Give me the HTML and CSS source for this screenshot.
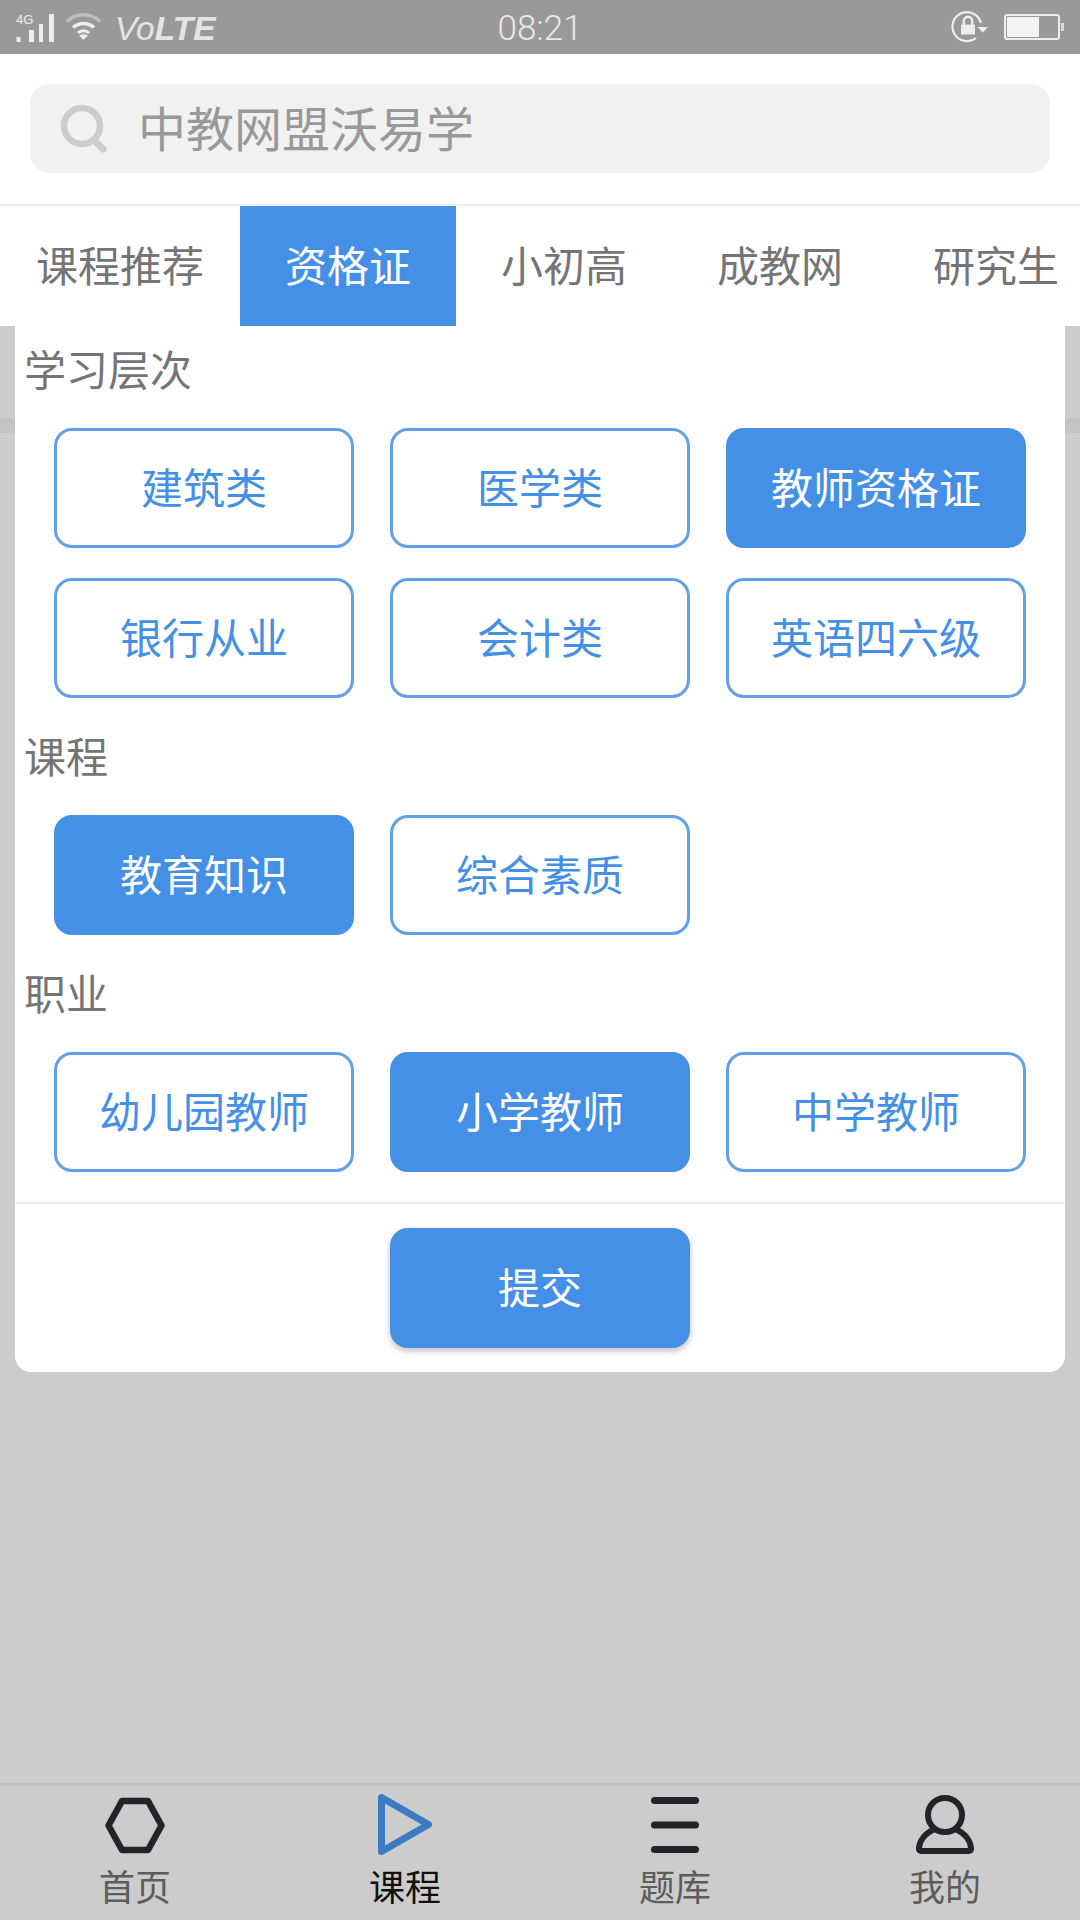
FILE: index.html
```html
<!DOCTYPE html>
<html lang="zh-CN">
<head>
<meta charset="utf-8">
<title>课程</title>
<link rel="stylesheet" href="styles.css">
</head>
<body>
<div class="page">
  <header class="status">
    <div class="status-left">
      <span class="net">
        <span class="net-label">4G</span>
        <svg class="signal" width="38" height="28" viewBox="0 0 38 28"><rect x="0.500" y="23" width="4" height="5" fill="#eee"/><rect x="13" y="16" width="5" height="12" fill="#eee"/><rect x="23" y="10" width="4" height="18" fill="#eee"/><rect x="33" y="0" width="5" height="28" fill="#eee"/></svg>
      </span>
      <svg class="wifi" width="37" height="28" viewBox="0 0 37 28" fill="none"><path d="M2 8.500C11 -0.500 26 -0.500 35 8.500" stroke="#bdbdbd" stroke-width="3.500"/><path d="M8 14.500C14 9 23 9 29 14.500" stroke="#eee" stroke-width="3.500"/><path d="M13 20C16 17 21 17 24 20" stroke="#eee" stroke-width="3"/><path d="M18.500 27l-4.500-4.500q4.500-3 9 0z" fill="#eee"/></svg>
      <span class="volte"><span class="volte-vo">Vo</span><b>LTE</b></span>
    </div>
    <time class="clock">08:21</time>
    <div class="status-right">
      <svg width="38" height="34" viewBox="0 0 38 34" fill="none"><path d="M30 13A14.500 14.500 0 1 0 25 28" stroke="#eee" stroke-width="2.200"/><path d="M26.500 17h10.500l-5.200 5.500z" fill="#eee"/><path d="M12.800 15V11a4.200 4.200 0 0 1 8.400 0V15" stroke="#eee" stroke-width="2.400"/><rect x="10" y="14.500" width="14" height="10" fill="#eee"/></svg>
      <span class="battery"><span class="battery-fill"></span></span>
      <span class="battery-tip"></span>
    </div>
  </header>

  <section class="search-wrap">
    <div class="search">
      <svg width="48" height="50" viewBox="0 0 48 50" fill="none" stroke="#ccc"><circle cx="22" cy="22" r="18" stroke-width="6.500"/><path d="M34 36l9 9" stroke-width="7" stroke-linecap="round"/></svg>
      <span class="search-text">中教网盟沃易学</span>
    </div>
  </section>

  <nav class="tabs">
    <a class="tab tab-first">课程推荐</a>
    <a class="tab tab-active">资格证</a>
    <a class="tab">小初高</a>
    <a class="tab">成教网</a>
    <a class="tab">研究生</a>
  </nav>

  <main class="overlay">
    <div class="panel">
      <section class="group">
        <h2 class="group-title">学习层次</h2>
        <div class="options">
          <button class="opt">建筑类</button>
          <button class="opt">医学类</button>
          <button class="opt opt-on">教师资格证</button>
          <button class="opt">银行从业</button>
          <button class="opt">会计类</button>
          <button class="opt">英语四六级</button>
        </div>
      </section>
      <section class="group">
        <h2 class="group-title">课程</h2>
        <div class="options">
          <button class="opt opt-on">教育知识</button>
          <button class="opt">综合素质</button>
        </div>
      </section>
      <section class="group">
        <h2 class="group-title">职业</h2>
        <div class="options">
          <button class="opt">幼儿园教师</button>
          <button class="opt opt-on">小学教师</button>
          <button class="opt">中学教师</button>
        </div>
      </section>
      <div class="panel-foot">
        <button class="opt opt-on submit">提交</button>
      </div>
    </div>
  </main>

  <footer class="bottom-nav">
    <a class="nav-item">
      <svg class="nav-icon" width="60" height="62" viewBox="0 0 60 62" fill="none"><path d="M17 7H43L56.500 31.500 43 56H17L3.500 31.500Z" stroke="#222428" stroke-width="6.500" stroke-linejoin="round"/></svg>
      <span>首页</span>
    </a>
    <a class="nav-item nav-active">
      <svg class="nav-icon" width="60" height="62" viewBox="0 0 60 62" fill="none"><path d="M6.500 3.500V57.500L53.500 30.500Z" stroke="#3a7bc4" stroke-width="7" stroke-linejoin="round"/></svg>
      <span>课程</span>
    </a>
    <a class="nav-item">
      <svg class="nav-icon" width="60" height="62" viewBox="0 0 60 62" fill="none" stroke="#222428" stroke-width="7" stroke-linecap="round"><path d="M9.500 6.500H50.500"/><path d="M9.500 31H50.500"/><path d="M9.500 55.500H50.500"/></svg>
      <span>题库</span>
    </a>
    <a class="nav-item">
      <svg class="nav-icon" width="60" height="62" viewBox="0 0 60 62" fill="none" stroke="#222428" stroke-width="6" stroke-linejoin="round"><circle cx="30" cy="21" r="17"/><path d="M20 35C10 39 4 47 4 55a2 2 0 0 0 2 2H54a2 2 0 0 0 2-2C56 47 50 39 40 35"/></svg>
      <span>我的</span>
    </a>
  </footer>
</div>
</body>
</html>
```

FILE: styles.css
```css
* {
  box-sizing: border-box;
}

html,
body {
  margin: 0;
  padding: 0;
}

body {
  font-family: Roboto, "Noto Sans CJK SC", sans-serif;
}

.page {
  width: 1080px;
  height: 1920px;
  display: flex;
  flex-direction: column;
  overflow: hidden;
  background: #ccc;
}

/* Status bar */
.status {
  height: 54px;
  flex: none;
  display: grid;
  grid-template-columns: 1fr auto 1fr;
  align-items: center;
  background: #999;
  color: #eee;
}

.status-left {
  display: flex;
  align-items: center;
  padding-left: 16px;
}

.net {
  display: block;
  position: relative;
  width: 38px;
  height: 28px;
  margin-top: 2px;
}

.net-label {
  position: absolute;
  left: 0;
  top: -1px;
  font: 13px/13px "Liberation Sans", sans-serif;
  color: #eee;
}

.signal {
  display: block;
}

.wifi {
  margin-left: 11px;
}

.volte {
  margin-left: 13px;
  margin-top: 4px;
  font: italic 33.500px/40px "Liberation Sans", sans-serif;
  color: #e4e4e4;
}

.volte-vo {
  font-weight: 400;
}

.clock {
  padding-top: 2px;
  font-size: 35px;
  font-weight: 300;
  color: #e8e8e8;
}

.status-right {
  display: flex;
  align-items: center;
  justify-content: flex-end;
  padding-right: 16px;
}

.battery {
  display: block;
  width: 56px;
  height: 26px;
  margin-left: 15px;
  padding: 1px;
  border: 2px solid #eee;
  border-radius: 3px;
}

.battery-fill {
  display: block;
  width: 32px;
  height: 100%;
  background: #f4f4f4;
}

.battery-tip {
  width: 3px;
  height: 8px;
  margin-left: 1px;
  background: #ddd;
}

/* Search */
.search-wrap {
  flex: none;
  height: 152px;
  padding: 30px 30px 31px;
  background: #fff;
  border-bottom: 2px solid #eee;
}

.search {
  height: 89px;
  display: flex;
  align-items: center;
  gap: 30px;
  padding-left: 30px;
  background: #f1f1f1;
  border-radius: 20px;
}

.search-text {
  margin-top: 4px;
  font-size: 48px;
  line-height: 60px;
  color: #999;
}

/* Tabs */
.tabs {
  flex: none;
  height: 120px;
  display: flex;
  background: #fff;
}

.tab {
  flex: none;
  width: 216px;
  display: flex;
  align-items: center;
  justify-content: center;
  padding-bottom: 5px;
  font-size: 42px;
  color: #757575;
}

.tab-first {
  width: 240px;
}

.tab-active {
  background: #4490e6;
  color: #fff;
}

/* Overlay panel */
.overlay {
  flex: 1;
  min-height: 0;
  padding: 0 15px;
  background: linear-gradient(#ccc 92px, #c4c4c4 92px, #c4c4c4 107px, #ccc 107px);
}

.panel {
  padding-bottom: 24px;
  background: #fff;
  border-radius: 0 0 16px 16px;
}

.group {
  padding-left: 9px;
  margin-bottom: 15px;
}

.group-title {
  margin: 0 0 10px;
  height: 92px;
  font-size: 42px;
  font-weight: 400;
  line-height: 92px;
  color: #757575;
}

.options {
  display: grid;
  grid-template-columns: repeat(3, 300px);
  gap: 30px 36px;
  padding-left: 30px;
}

.opt {
  height: 120px;
  padding: 0 0 6px;
  background: #fff;
  border: 3px solid #619fe8;
  border-radius: 18px;
  font-family: Roboto, "Noto Sans CJK SC", sans-serif;
  font-size: 42px;
  color: #4490e6;
}

.opt-on {
  background: #4490e6;
  border-color: #4490e6;
  color: #fff;
}

.panel-foot {
  display: flex;
  justify-content: center;
  margin-top: 30px;
  padding-top: 24px;
  border-top: 2px solid #eee;
}

.submit {
  width: 300px;
  box-shadow: 0 3px 6px rgba(0, 0, 0, .25);
}

/* Bottom nav */
.bottom-nav {
  flex: none;
  height: 137px;
  display: grid;
  grid-template-columns: repeat(4, 270px);
  background: #ccc;
  border-top: 3px solid #bfbfbf;
}

.nav-item {
  display: flex;
  flex-direction: column;
  align-items: center;
  padding-top: 8px;
  font-size: 36px;
  line-height: 50px;
  color: #5c5c5c;
}

.nav-icon {
  display: block;
  flex: none;
  margin-bottom: 8px;
}

.nav-active {
  color: #111;
}
```
